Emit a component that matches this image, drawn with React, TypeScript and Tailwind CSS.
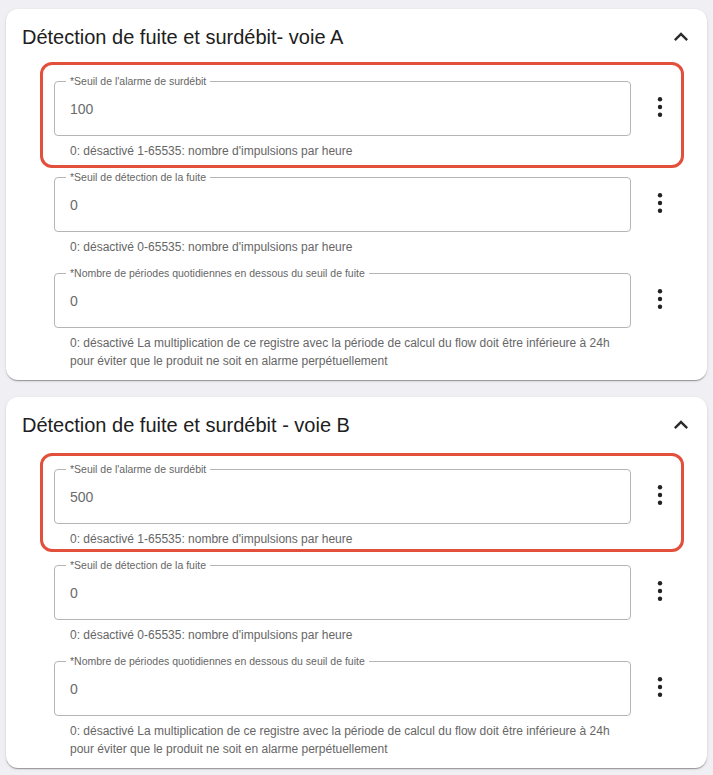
import React from "react";

type Field = {
  label: string;
  value: string;
  helper: string;
};

const fields = (max: string): Field[] => [
  {
    label: "*Seuil de l'alarme de surdébit",
    value: max,
    helper: "0: désactivé 1-65535: nombre d'impulsions par heure",
  },
  {
    label: "*Seuil de détection de la fuite",
    value: "0",
    helper: "0: désactivé 0-65535: nombre d'impulsions par heure",
  },
  {
    label: "*Nombre de périodes quotidiennes en dessous du seuil de fuite",
    value: "0",
    helper:
      "0: désactivé La multiplication de ce registre avec la période de calcul du flow doit être inférieure à 24h pour éviter que le produit ne soit en alarme perpétuellement",
  },
];

const ChevronUp = () => (
  <svg width="28" height="28" viewBox="0 0 24 24" fill="#2b2b2b">
    <path d="M12 8l-6 6 1.41 1.41L12 10.83l4.59 4.58L18 14z" />
  </svg>
);

const MoreVert = () => (
  <svg width="8" height="24" viewBox="0 0 8 24" fill="#222">
    <circle cx="4" cy="4.3" r="2.2" />
    <circle cx="4" cy="12" r="2.2" />
    <circle cx="4" cy="19.7" r="2.2" />
  </svg>
);

const FieldRow = ({ field, highlight }: { field: Field; highlight?: string }) => (
  <div className="relative flex items-start">
    {highlight && (
      <div className={`absolute border-[3px] border-[#e2503c] rounded-[12px] pointer-events-none ${highlight}`} />
    )}
    <div className="flex-1 min-w-0">
      <div className="relative h-[55px] border border-[#b5b5b5] rounded-[4px] flex items-center pl-[15px]">
        <span className="absolute -top-[8px] left-[11px] px-[4px] bg-white text-[10.5px] leading-[14px] text-[#666] whitespace-nowrap">
          {field.label}
        </span>
        <span className="text-[14px] text-[#6b6b6b] mt-[1px]">{field.value}</span>
      </div>
      <p className="mt-[6px] px-4 text-[12px] leading-[18px] text-[#666]">{field.helper}</p>
    </div>
    <div className="w-10 ml-[9px] h-[55px] flex items-center justify-center pb-[4px]">
      <MoreVert />
    </div>
  </div>
);

const Section = ({ title, max, highlight }: { title: string; max: string; highlight: string }) => (
  <section className="bg-white rounded-[12px] pl-4 pb-[10px] shadow-[0_2px_1px_-1px_rgba(0,0,0,0.2),0_1px_1px_0_rgba(0,0,0,0.14),0_1px_3px_0_rgba(0,0,0,0.12)]">
    <div className="flex items-center justify-between pt-3 pr-3 h-11">
      <h2 className="text-[20px] leading-8 text-[#202020]">{title}</h2>
      <ChevronUp />
    </div>
    <div className="mt-[28px] ml-[32px] mr-[27px] flex flex-col gap-[17px]">
      {fields(max).map((f, i) => (
        <FieldRow key={i} field={f} highlight={i === 0 ? highlight : undefined} />
      ))}
    </div>
  </section>
);

export default function App() {
  return (
    <div className="min-h-screen bg-[#efeff4] px-[6px] pt-[9px] pb-[7px] flex flex-col gap-[17px] font-['Liberation_Sans',Arial,sans-serif]">
      <Section
        title="Détection de fuite et surdébit- voie A"
        max="100"
        highlight="-left-[14px] -right-[4px] -top-[19px] -bottom-[8px]"
      />
      <Section
        title="Détection de fuite et surdébit - voie B"
        max="500"
        highlight="-left-[14px] -right-[4px] -top-[16px] -bottom-[4px]"
      />
    </div>
  );
}
